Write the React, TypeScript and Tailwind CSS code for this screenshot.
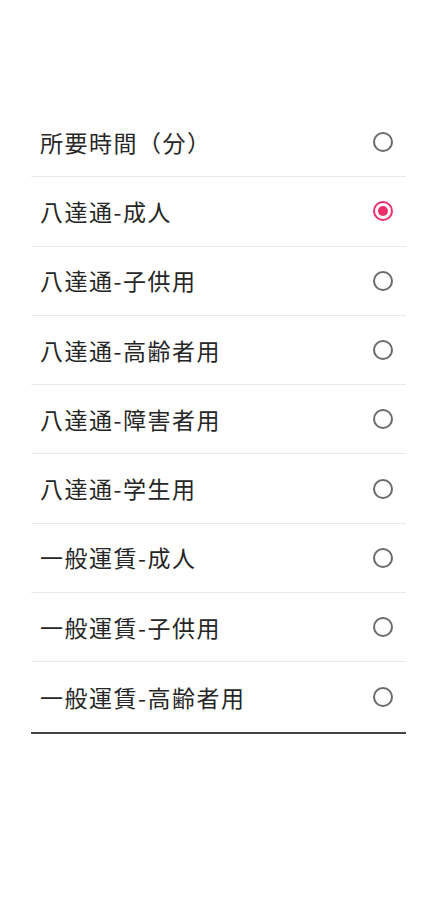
import React from "react";

const items = [
  "所要時間（分）",
  "八達通-成人",
  "八達通-子供用",
  "八達通-高齢者用",
  "八達通-障害者用",
  "八達通-学生用",
  "一般運賃-成人",
  "一般運賃-子供用",
  "一般運賃-高齢者用",
];

export default function App() {
  const selected = 1;
  return (
    <div
      className="w-[438px] h-[900px] bg-white"
      style={{ fontFamily: '"Noto Sans CJK JP", "Noto Sans", sans-serif' }}
    >
      <div className="pt-[108px] pl-[31px] pr-[32px]">
        <div className="border-b-2 border-[#444]">
          {items.map((label, i) => (
            <div
              key={label}
              className={`h-[69.3px] flex items-center justify-between pl-[9px] pr-[13px] ${
                i < items.length - 1 ? "border-b border-[#e9e9e9]" : ""
              }`}
            >
              <span className="text-[23px] leading-none text-[#262626] tracking-[1.5px]">{label}</span>
              {i === selected ? (
                <span className="w-[20px] h-[20px] rounded-full border-2 border-[#ec2f6b] flex items-center justify-center">
                  <span className="w-[10px] h-[10px] rounded-full bg-[#ec2f6b]" />
                </span>
              ) : (
                <span className="w-[20px] h-[20px] rounded-full border-2 border-[#6b6b6b]" />
              )}
            </div>
          ))}
        </div>
      </div>
    </div>
  );
}
